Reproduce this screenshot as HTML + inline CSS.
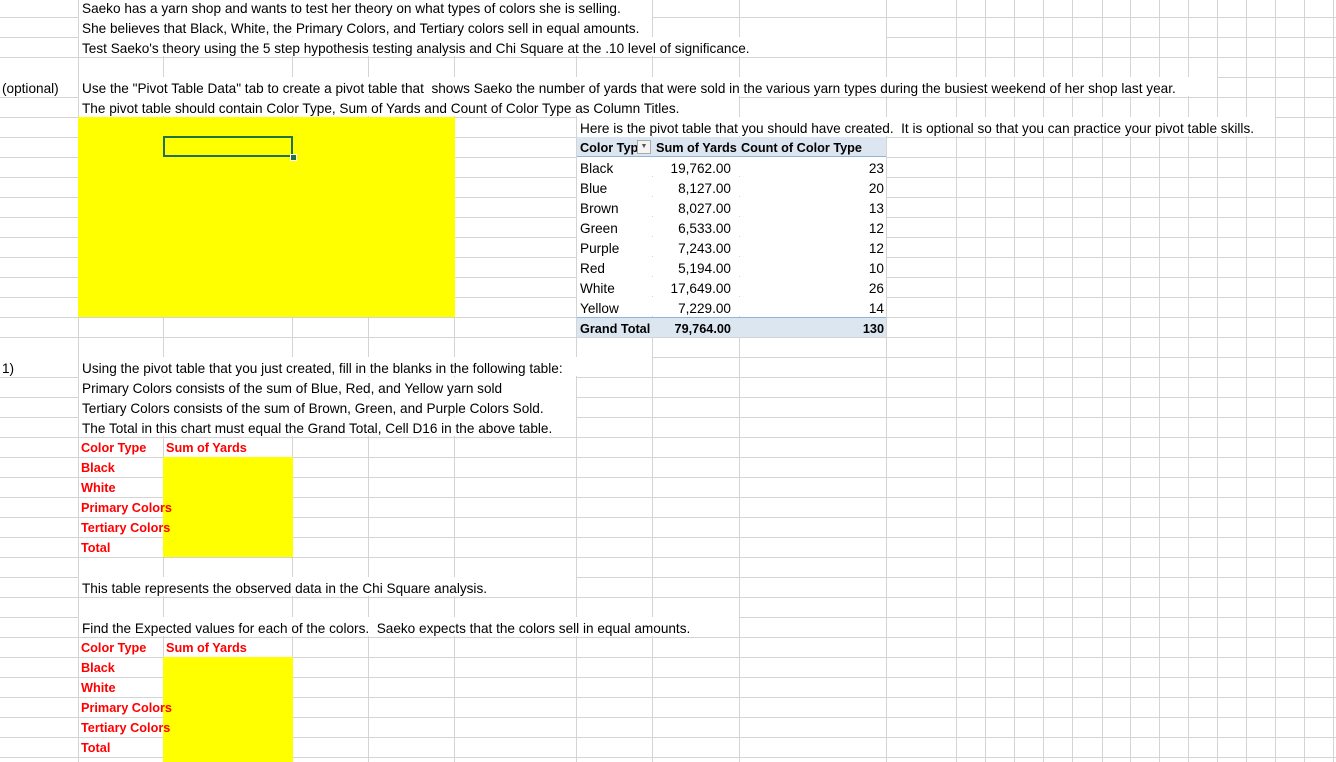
<!DOCTYPE html>
<html><head><meta charset="utf-8"><style>
body{margin:0;width:1336px;height:762px;overflow:hidden;background:#fff;position:relative;font-family:"Liberation Sans",Arial,sans-serif;font-size:13.6px;color:#000}
.grid{position:absolute;left:0;top:0;width:1336px;height:762px;background:repeating-linear-gradient(to bottom,transparent 0,transparent 17px,#d4d4d4 17px,#d4d4d4 18px,transparent 18px,transparent 20px)}
.v{position:absolute;top:0;width:1px;height:762px;background:#d4d4d4}
.c,.t,.num{position:absolute;height:19px;line-height:17px;padding-top:3px;box-sizing:border-box;white-space:nowrap}
.c{background:#fff;padding-left:3px}
.y{position:absolute;background:#ffff00}
.r{color:#ff0000;font-weight:bold;font-size:12.7px}
.b{font-weight:bold;font-size:12.7px}
.num{text-align:right}
</style></head><body>
<div class="grid"></div>
<div class="v" style="left:78px"></div><div class="v" style="left:163px"></div><div class="v" style="left:292px"></div><div class="v" style="left:368px"></div><div class="v" style="left:454px"></div><div class="v" style="left:576px"></div><div class="v" style="left:652px"></div><div class="v" style="left:739px"></div><div class="v" style="left:886px"></div><div class="v" style="left:956px"></div><div class="v" style="left:985px"></div><div class="v" style="left:1014px"></div><div class="v" style="left:1043px"></div><div class="v" style="left:1072px"></div><div class="v" style="left:1102px"></div><div class="v" style="left:1130px"></div><div class="v" style="left:1159px"></div><div class="v" style="left:1188px"></div><div class="v" style="left:1217px"></div><div class="v" style="left:1246px"></div><div class="v" style="left:1275px"></div><div class="v" style="left:1304px"></div><div class="v" style="left:1333px"></div>

<div class="c" style="left:79px;top:-3px;width:573px">Saeko has a yarn shop and wants to test her theory on what types of colors she is selling.</div>
<div class="c" style="left:79px;top:17px;width:573px">She believes that Black, White, the Primary Colors, and Tertiary colors sell in equal amounts.</div>
<div class="c" style="left:79px;top:37px;width:807px">Test Saeko's theory using the 5 step hypothesis testing analysis and Chi Square at the .10 level of significance.</div>
<div class="c" style="left:0px;top:77px;width:78px;padding-left:2px">(optional)</div>
<div class="c" style="left:79px;top:77px;width:1138px">Use the "Pivot Table Data" tab to create a pivot table that &nbsp;shows Saeko the number of yards that were sold in the various yarn types during the busiest weekend of her shop last year.</div>
<div class="c" style="left:79px;top:97px;width:660px">The pivot table should contain Color Type, Sum of Yards and Count of Color Type as Column Titles.</div>

<div class="y" style="left:78px;top:117px;width:377px;height:200px"></div>
<div style="position:absolute;left:163px;top:136px;width:126px;height:17px;border:2px solid #217346"></div>
<div style="position:absolute;left:290px;top:154px;width:5px;height:5px;background:#217346;border:1px solid #fff"></div>

<div class="c" style="left:577px;top:117px;width:698px">Here is the pivot table that you should have created. &nbsp;It is optional so that you can practice your pivot table skills.</div>
<div class="c b" style="left:577px;top:137px;width:309px;background:#dce6f1;border-bottom:1px solid #95b3d7;height:20px">Color Typ</div>
<div style="position:absolute;left:637px;top:140px;width:14px;height:14px;border:1px solid #aaa;background:#f4f4f4;box-sizing:border-box;font-size:7px;line-height:12px;text-align:center;color:#555">▼</div>
<div class="t b" style="left:656px;top:137px">Sum of Yards</div>
<div class="t b" style="left:741px;top:137px">Count of Color Type</div>

<div class="c" style="left:577px;top:157px;width:309px">Black</div>
<div class="c" style="left:577px;top:177px;width:309px">Blue</div>
<div class="c" style="left:577px;top:197px;width:309px">Brown</div>
<div class="c" style="left:577px;top:217px;width:309px">Green</div>
<div class="c" style="left:577px;top:237px;width:309px">Purple</div>
<div class="c" style="left:577px;top:257px;width:309px">Red</div>
<div class="c" style="left:577px;top:277px;width:309px">White</div>
<div class="c" style="left:577px;top:297px;width:309px">Yellow</div>
<div class="c b" style="left:577px;top:317px;width:309px;background:#dce6f1;border-top:1px solid #95b3d7;height:20px">Grand Total</div>

<div class="num" style="left:600px;width:131px;top:157px">19,762.00</div>
<div class="num" style="left:600px;width:131px;top:177px">8,127.00</div>
<div class="num" style="left:600px;width:131px;top:197px">8,027.00</div>
<div class="num" style="left:600px;width:131px;top:217px">6,533.00</div>
<div class="num" style="left:600px;width:131px;top:237px">7,243.00</div>
<div class="num" style="left:600px;width:131px;top:257px">5,194.00</div>
<div class="num" style="left:600px;width:131px;top:277px">17,649.00</div>
<div class="num" style="left:600px;width:131px;top:297px">7,229.00</div>
<div class="num b" style="left:600px;width:131px;top:318px">79,764.00</div>
<div class="num" style="left:800px;width:84px;top:157px">23</div>
<div class="num" style="left:800px;width:84px;top:177px">20</div>
<div class="num" style="left:800px;width:84px;top:197px">13</div>
<div class="num" style="left:800px;width:84px;top:217px">12</div>
<div class="num" style="left:800px;width:84px;top:237px">12</div>
<div class="num" style="left:800px;width:84px;top:257px">10</div>
<div class="num" style="left:800px;width:84px;top:277px">26</div>
<div class="num" style="left:800px;width:84px;top:297px">14</div>
<div class="num b" style="left:800px;width:84px;top:318px">130</div>

<div class="c" style="left:0;top:357px;width:78px;padding-left:2px">1)</div>
<div class="c" style="left:79px;top:357px;width:573px">Using the pivot table that you just created, fill in the blanks in the following table:</div>
<div class="c" style="left:79px;top:377px;width:497px">Primary Colors consists of the sum of Blue, Red, and Yellow yarn sold</div>
<div class="c" style="left:79px;top:397px;width:497px">Tertiary Colors consists of the sum of Brown, Green, and Purple Colors Sold.</div>
<div class="c" style="left:79px;top:417px;width:497px">The Total in this chart must equal the Grand Total, Cell D16 in the above table.</div>
<div class="t r" style="left:81px;top:437px">Color Type</div>
<div class="t r" style="left:166px;top:437px">Sum of Yards</div>
<div class="y" style="left:163px;top:457px;width:130px;height:100px"></div>
<div class="t r" style="left:81px;top:457px">Black</div>
<div class="t r" style="left:81px;top:477px">White</div>
<div class="t r" style="left:81px;top:497px">Primary Colors</div>
<div class="t r" style="left:81px;top:517px">Tertiary Colors</div>
<div class="t r" style="left:81px;top:537px">Total</div>

<div class="c" style="left:79px;top:577px;width:497px">This table represents the observed data in the Chi Square analysis.</div>
<div class="c" style="left:79px;top:617px;width:660px">Find the Expected values for each of the colors. &nbsp;Saeko expects that the colors sell in equal amounts.</div>
<div class="t r" style="left:81px;top:637px">Color Type</div>
<div class="t r" style="left:166px;top:637px">Sum of Yards</div>
<div class="y" style="left:163px;top:657px;width:130px;height:105px"></div>
<div class="t r" style="left:81px;top:657px">Black</div>
<div class="t r" style="left:81px;top:677px">White</div>
<div class="t r" style="left:81px;top:697px">Primary Colors</div>
<div class="t r" style="left:81px;top:717px">Tertiary Colors</div>
<div class="t r" style="left:81px;top:737px">Total</div>
</body></html>
